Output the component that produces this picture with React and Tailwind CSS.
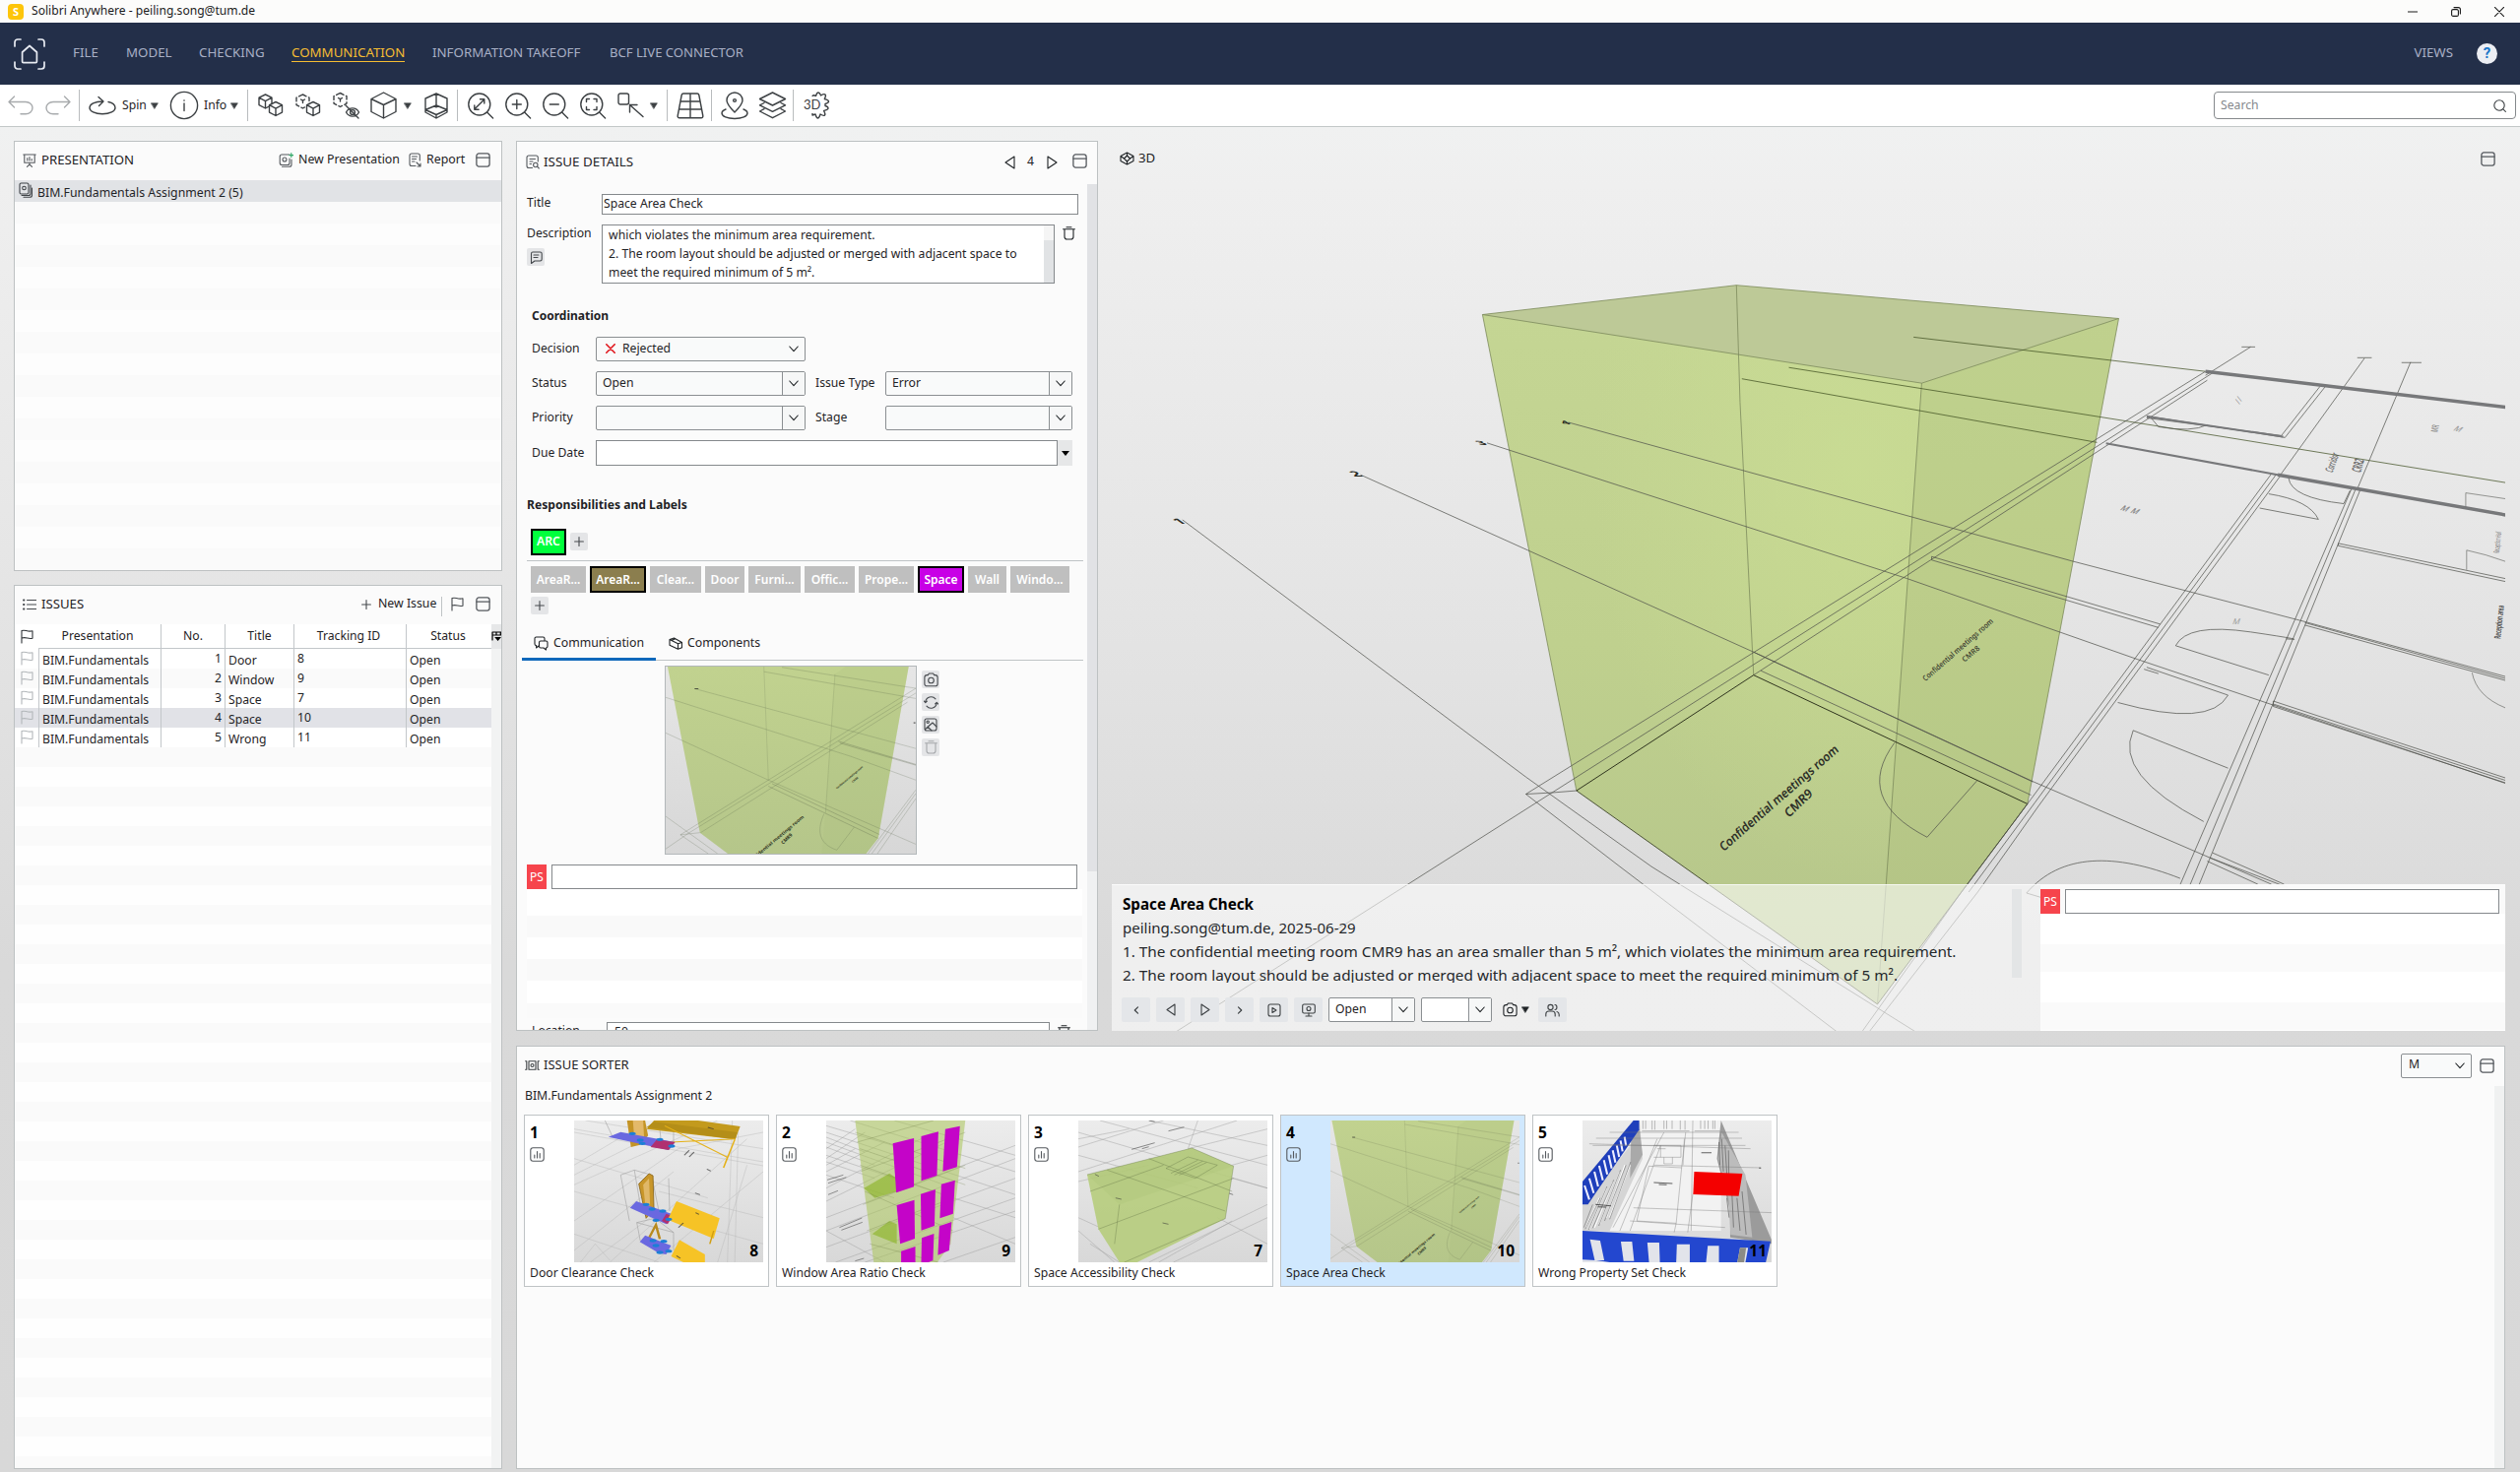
import React from 'react';

/* ---------- small drawing helpers ---------- */

function Icon({ w = 16, h = w, box, className = '', sw = 1.2, children }) {
  return (
    <svg
      width={w}
      height={h}
      viewBox={box || `0 0 ${w} ${h}`}
      fill="none"
      stroke="currentColor"
      strokeWidth={sw}
      strokeLinecap="round"
      strokeLinejoin="round"
      className={'block shrink-0 ' + className}
    >
      {children}
    </svg>
  );
}

const Caret = ({ className = '' }) => (
  <Icon w={8} h={7} className={className} sw={0.6}>
    <path d="M.6 .8h6.8L4 6.2z" fill="currentColor" />
  </Icon>
);

const Chevron = ({ className = '' }) => (
  <Icon w={10} h={7} className={className} sw={1.1}>
    <path d="M.8 1 5 5.6 9.2 1" />
  </Icon>
);

const WindowIcon = ({ className = '' }) => (
  <Icon w={15} h={15} className={'text-[#55595e] ' + className} sw={1.3}>
    <rect x=".9" y=".9" width="13.2" height="13.2" rx="2.4" />
    <path d="M1 5.2h13" />
  </Icon>
);

const Trash = ({ className = '' }) => (
  <Icon w={13} h={14} className={className} sw={1.1}>
    <path d="M.6 2.8h11.8M4 .7h5M2 3v7.2c0 1.7.9 2.8 2.6 2.8h3.8c1.7 0 2.6-1.1 2.6-2.8V3" />
  </Icon>
);

const Flag = ({ className = '' }) => (
  <Icon w={13} h={15} className={className} sw={1.1}>
    <path d="M1 14V1.6c3.6-1.6 5.4 1.6 11 .2v7.4c-4.6 1.2-6-1.6-11-.2" />
  </Icon>
);

const Camera = ({ className = '' }) => (
  <Icon w={15} h={15} className={className} sw={1.1}>
    <path d="M4.3 2.6 5.4 1h4.2l1.1 1.6h1c1.4 0 2.4 1 2.4 2.4v6.4c0 1.4-1 2.4-2.4 2.4H3.300c-1.400 0-2.400-1-2.400-2.400V5c0-1.400 1-2.400 2.400-2.400z" />
    <circle cx="7.5" cy="8" r="2.800" />
  </Icon>
);

const PlusIcon = ({ className = '' }) => (
  <Icon w={10} h={10} className={className} sw={1.1}>
    <path d="M5 .6v8.800M.6 5h8.800" />
  </Icon>
);

const Lens = ({ children }) => (
  <Icon w={27} h={27} sw={1.400}>
    <circle cx="11.800" cy="12" r="11" />
    <path d="m19.600 20 6 6" />
    {children}
  </Icon>
);

const CUBE = 'M7.500 1 14 4.200v7.400L7.500 15 1 11.600V4.200zM1 4.200l6.500 3.400L14 4.200M7.500 7.600V15';

/* ---------- title bar, menu and toolbar ---------- */

function TitleBar() {
  return (
    <div className="flex h-[23px] shrink-0 items-center bg-[#fcfcfb] text-[12.1px] text-[#1b1b1b]">
      <div className="ml-[8px] flex h-[16px] w-[16px] items-center justify-center rounded-[4px] bg-[#fdc50a] text-[11px] font-bold leading-none text-white">S</div>
      <span className="ml-[8px]">Solibri Anywhere - peiling.song@tum.de</span>
      <div className="ml-auto flex items-center text-[#1b1b1b]">
        <Icon w={10} h={10} sw={1}><path d="M0 5h10" /></Icon>
        <Icon w={10} h={10} sw={1.100} className="ml-[34px]">
          <rect x=".6" y="2.600" width="6.800" height="6.800" rx="1.500" />
          <path d="M3 .6h4.400a2 2 0 0 1 2 2V7" />
        </Icon>
        <Icon w={10} h={10} sw={1.100} className="ml-[34px] mr-[16px]"><path d="m.4.4 9.200 9.200M9.600.4.4 9.600" /></Icon>
      </div>
    </div>
  );
}

function MenuBar() {
  return (
    <div className="flex h-[63px] shrink-0 items-center bg-[#232f49] pb-[2px] text-[13.300px] text-[#a9b0c6]">
      <Icon w={32} h={32} className="ml-[14px] mt-[2px] text-[#e8ebf2]" sw={1.700}>
        <path d="M1 8V4a3 3 0 0 1 3-3h3M25 1h3a3 3 0 0 1 3 3v4M31 24v4a3 3 0 0 1-3 3h-3M7 31H4a3 3 0 0 1-3-3v-4" />
        <path d="M16 7.500 8.600 14v9.500c0 .8.400 1.200 1.200 1.200h12.400c.8 0 1.200-.4 1.200-1.200V14z" />
      </Icon>
      <span className="ml-[28px] w-[54px]">FILE</span>
      <span className="w-[74px]">MODEL</span>
      <span className="w-[94px]">CHECKING</span>
      <span className="h-[18px] w-[115px] whitespace-nowrap border-b border-[#f5bd33] leading-[17px] text-[#f5bd33]">COMMUNICATION</span>
      <span className="ml-[28px] w-[180px]">INFORMATION TAKEOFF</span>
      <span className="text-[13.100px]">BCF LIVE CONNECTOR</span>
      <span className="ml-auto">VIEWS</span>
      <div className="ml-[24px] mr-[23px] mt-[1px] flex h-[21px] w-[21px] items-center justify-center rounded-full bg-[#eceef3] font-['Roboto',sans-serif] text-[15px] font-bold text-[#1b76c8]">?</div>
    </div>
  );
}

const Sep = ({ className = '' }) => <div className={'h-[32px] w-px shrink-0 bg-[#b9bcbe] ' + className} />;

function Toolbar() {
  return (
    <div className="flex h-[43px] shrink-0 items-center border-b border-[#c3c8c8] bg-white text-[12.200px] text-[#3c4043]">
      <Icon w={26} h={20} className="ml-[8px] text-[#a8abad]" sw={1.400}><path d="M6.500 1 1 6.500 6.500 12M1.500 6.500H18c4 0 7 2.500 7 6s-3 6.300-7 6.300h-5" /></Icon>
      <Icon w={26} h={20} className="ml-[12px] text-[#a8abad]" sw={1.400}><path d="m19.500 1 5.500 5.500-5.500 5.500M24.500 6.500H8c-4 0-7 2.500-7 6s3 6.300 7 6.300h5" /></Icon>
      <Sep className="ml-[8px]" />
      <Icon w={28} h={20} className="ml-[9px]" sw={1.400}>
        <path d="M10 1.500 15 6l-4.500 4.500M14.500 6C6 6 1 9 1 12.500 1 16 6.500 18.800 14 18.800S27 16 27 12.500c0-3-2.500-5-7-6" />
      </Icon>
      <span className="ml-[6px] w-[29px] text-[#1f2326]">Spin</span>
      <Caret />
      <Icon w={30} h={30} className="ml-[11px]" sw={1.400}>
        <circle cx="15" cy="15" r="13.600" /><path d="M15 13v7.500" strokeWidth="1.400" /><path d="M15 10v.1" strokeWidth="1.600" />
      </Icon>
      <span className="ml-[5px] w-[27px] text-[#1f2326]">Info</span>
      <Caret />
      <Sep className="ml-[9px]" />
      <Icon w={26} h={24} className="ml-[10px]" sw={1.400}>
        <path d={CUBE} /><path d={CUBE} transform="translate(10.500 7.500)" fill="#fff" />
      </Icon>
      <Icon w={26} h={24} className="ml-[12px]" sw={1.400}>
        <path d="M7.500 1 14 4.200v7.400L7.500 15 1 11.600V4.200z" strokeDasharray="4 2.600" /><path d="M5.500 6 7.500 7.200 9.500 6M7.500 7.200V9.500" />
        <path d={CUBE} transform="translate(10.500 7.500)" fill="#fff" />
      </Icon>
      <Icon w={28} h={28} className="ml-[12px]" sw={1.400}>
        <path d="M7.500 1.500 14 4.700v7.400l-6.500 3.400L1 12.100V4.700z" strokeDasharray="4 2.600" /><path d="M5.500 6.500 7.500 7.700l2-1.200M7.500 7.700V10" />
        <path d="M13.500 21c3-5.500 10-5.500 13 0-3 5.500-10 5.500-13 0zM13 14l13 13" /><circle cx="20" cy="21" r="2.400" />
      </Icon>
      <Icon w={27} h={28} className="ml-[10px]" sw={1.400}>
        <path d="M13.500 1 26 7.500v13L13.500 27 1 20.500v-13zM1 7.500 13.500 13.500 26 7.500M13.500 13.500V27" />
      </Icon>
      <Caret className="ml-[7px]" />
      <Icon w={24} h={27} className="ml-[13px]" sw={1.400}>
        <path d="M12 1 23 6v14l-11 6L1 20V6zM12 1v14M1 17.500l11-4.500 11 4.500L12 22.500zM12 22.500V26" />
      </Icon>
      <Sep className="ml-[9px]" />
      <div className="ml-[10px] flex gap-[11px]">
        <Lens><path d="m7 16.800 9.600-9.600M12.500 6.800h4.300v4.300M6.800 13v4.200h4.300" /></Lens>
        <Lens><path d="M11.800 7.500v9M7.300 12h9" /></Lens>
        <Lens><path d="M7.300 12h9" /></Lens>
        <Lens><path d="M6.500 9.500v-3h3M14 6.500h3v3M17 14.500v3h-3M9.500 17.500h-3v-3" /></Lens>
      </div>
      <Icon w={27} h={26} className="ml-[11px]" sw={1.400}>
        <rect x="1" y="1" width="10.500" height="11" rx="2" /><path d="M12.500 20v-7.500h7.500M12.500 12.500 26 24.500" />
      </Icon>
      <Caret className="ml-[6px]" />
      <Sep className="ml-[9px]" />
      <Icon w={28} h={27} className="ml-[9px]" sw={1.400}>
        <path d="M7 1h14c1 0 1.600.5 1.800 1.500l4 21c.2 1.300-.4 2.200-1.800 2.200H3c-1.400 0-2-.9-1.800-2.200l4-21C5.400 1.500 6 1 7 1zM14 1v24.500M4 9h20M2.500 17h23" />
      </Icon>
      <Sep className="ml-[7px]" />
      <Icon w={28} h={29} className="ml-[9px]" sw={1.400}>
        <path d="M14 21C9 16 6 12.500 6 9a8 8 0 0 1 16 0c0 3.500-3 7-8 12z" /><circle cx="14" cy="9" r="1.400" />
        <path d="M5 18c-2.500 1-4 2.300-4 4 0 3.200 5.500 5.500 13 5.500S27 25.200 27 22c0-1.700-1.500-3-4-4" />
      </Icon>
      <Icon w={29} h={28} className="ml-[10px]" sw={1.400}>
        <path d="m14.500 1 13 6.500-13 6.500-13-6.500zM6 11.500l-4.500 2.300 13 6.500 13-6.500L23 11.500M6 17.700 1.500 20l13 6.700 13-6.700-4.500-2.300" />
      </Icon>
      <Sep className="ml-[6px]" />
      <div className="relative ml-[10px] h-[30px] w-[30px]">
        <Icon w={30} h={30} sw={1.400}>
          <path d="M9 22.500V25l3-1c.8 2.500 1 4 2.500 4s1.700-1.500 2.500-4c2.500 1.500 3.500 2 4.500 1s.5-2-1-4.500c2.800-.8 4.500-1 4.500-2.500 0-1.400-.8-1.800-3-2.500v-2c2.200-.7 3.500-1.100 3.500-2.500s-1.700-1.700-4.200-2.500c1.300-2.400 1.700-3.500.7-4.500s-2-.5-4.500 1C16.700 3 16.500 2 15 2s-1.700 1-2.500 3.500C10.500 4.500 9.500 4.500 9 6" />
        </Icon>
        <span className="absolute left-0 top-[6px] bg-white font-['Lato',sans-serif] text-[13px] leading-[17px]">3D</span>
      </div>
      <div className="ml-auto mr-[4px] flex h-[28px] w-[307px] items-center rounded-[4px] border border-[#85898c] bg-white pl-[6px] pr-[9px]">
        <span className="pt-px text-[#85888c]">Search</span>
        <Icon w={13} h={13} className="ml-auto" sw={1.100}><circle cx="6" cy="6" r="5.200" /><path d="m9.800 9.800 2.600 2.600" /></Icon>
      </div>
    </div>
  );
}

/* ---------- left column ---------- */

function PresentationPanel() {
  return (
    <section className="flex h-[437px] w-[496px] shrink-0 flex-col border border-[#bdc1c2] bg-[#fbfbfb]">
      <header className="flex h-[39px] shrink-0 items-center pb-[2px] pl-[8px] pr-[11px]">
        <Icon w={14} h={14} className="text-[#55595e]" sw={1.100}>
          <path d="M.8 1h12.400M1.800 1v8.200h10.400V1M4.500 13.300 7 11l2.500 2.300M7 9.200V11M4.800 7V4.500M7 7V3.500M9.200 7V5.500" />
        </Icon>
        <span className="ml-[5px] text-[13.200px]">PRESENTATION</span>
        <Icon w={15} h={15} className="ml-auto text-[#55595e]" sw={1.100}>
          <path d="M11 2H3.200C2 2 1.200 2.800 1.200 4v6.500c0 1.200.8 2 2 2H9c1.200 0 2-.8 2-2V6M3.500 14.200H11c1.200 0 2-.8 2-2V7" /><circle cx="6" cy="7" r="2" />
          <path d="M12.800.6v4M10.800 2.600h4" stroke="#2fa765" />
        </Icon>
        <span className="ml-[5px] w-[103px] text-[12.350px]">New Presentation</span>
        <Icon w={13} h={15} className="ml-[9px] text-[#55595e]" sw={1.100}>
          <path d="M11.300 8V3c0-1.300-.8-2-2-2H3c-1.300 0-2 .7-2 2v8.500c0 1.300.7 2 2 2h4M3.500 4h5M3.500 6.500h4M3.500 9H6M8 10l4 4M12 11v3H9" />
        </Icon>
        <span className="ml-[5px] w-[39px] text-[12.350px]">Report</span>
        <WindowIcon className="ml-[11px]" />
      </header>
      <div className="flex h-[22px] shrink-0 items-center bg-[#e1e3e6] pl-[4px]">
        <Icon w={14} h={16} className="mb-[2px] text-[#3f4347]" sw={1.100}>
          <rect x="1" y="1" width="9" height="11" rx="1.500" /><circle cx="5.500" cy="6" r="1.800" /><path d="M3 13.500h7c1.200 0 2-.7 2-2V3M5 15.300h6.500c1.300 0 2-.8 2-2V6" />
        </Icon>
        <span className="ml-[5px] pt-[5px] text-[12.300px]">BIM.Fundamentals Assignment 2 (5)</span>
      </div>
      <div className="flex-1 bg-[repeating-linear-gradient(180deg,#fafafa_0px,#fafafa_22px,#fdfdfd_22px,#fdfdfd_44px)]" />
    </section>
  );
}

const ISSUES = [
  ['1', 'Door', '8'],
  ['2', 'Window', '9'],
  ['3', 'Space', '7'],
  ['4', 'Space', '10'],
  ['5', 'Wrong', '11'],
];
const ROW_BG = ['bg-white', 'bg-[#fafafa]', 'bg-white', 'bg-[#e1e2e7]', 'bg-white'];

function IssuesPanel() {
  return (
    <section className="mt-[14px] flex h-[898px] w-[496px] shrink-0 flex-col border border-[#bdc1c2] bg-[#fbfbfb]">
      <header className="flex h-[39px] shrink-0 items-center pb-[2px] pl-[8px] pr-[11px]">
        <Icon w={14} h={12} className="text-[#45494d]" sw={1.100}><path d="M4.500 1.500H14M4.500 6H14M4.500 10.500H14" /><path d="M1 1.500h.4M1 6h.4M1 10.500h.4" strokeWidth="2" /></Icon>
        <span className="ml-[5px] text-[13.200px]">ISSUES</span>
        <PlusIcon className="ml-auto text-[#45494d]" />
        <span className="ml-[7px] w-[60px] text-[12.300px]">New Issue</span>
        <div className="ml-[4px] mt-[4px] h-[20px] w-px bg-[#bfc4c6]" />
        <Flag className="ml-[9px] text-[#45494d]" />
        <WindowIcon className="ml-[12px]" />
      </header>
      <div className="flex min-h-0 flex-1 text-[12.200px]">
        <div className="flex w-[484px] flex-col">
          <div className="flex h-[25px] shrink-0 bg-white text-center leading-[23px]">
            <div className="w-[24px] pl-[6px] pt-[5px]"><Flag className="text-[#303438]" /></div>
            <div className="w-[125px] border-b border-r border-[#c3c7ca] pr-[4px]">Presentation</div>
            <div className="w-[65px] border-b border-r border-[#c3c7ca]">No.</div>
            <div className="w-[70px] border-b border-r border-[#c3c7ca]">Title</div>
            <div className="w-[114px] border-b border-r border-[#c3c7ca] pr-[3px]">Tracking ID</div>
            <div className="flex-1 border-b border-[#c3c7ca] pr-[2px]">Status</div>
          </div>
          {ISSUES.map((r, i) => (
            <div key={r[0]} className={'flex h-[20px] shrink-0 ' + ROW_BG[i]}>
              <div className="w-[25px] border-r border-[#c3c7ca] pl-[6px] pt-[2px]"><Flag className="text-[#b3b7ba]" /></div>
              <div className="w-[124px] border-r border-[#c3c7ca] pl-[3px] leading-[23px]">BIM.Fundamentals</div>
              <div className="w-[65px] border-r border-[#c3c7ca] pr-[3px] text-right leading-[20px]">{r[0]}</div>
              <div className="w-[70px] border-r border-[#c3c7ca] pl-[3px] leading-[23px]">{r[1]}</div>
              <div className="w-[114px] border-r border-[#c3c7ca] pl-[3px] leading-[20px]">{r[2]}</div>
              <div className="pl-[3px] leading-[23px]">Open</div>
            </div>
          ))}
          <div className="flex-1 bg-[repeating-linear-gradient(180deg,#fafafa_0px,#fafafa_20px,#fefefe_20px,#fefefe_40px)]" />
        </div>
        <div className="flex-1 bg-[#f2f3f3]">
          <div className="h-[25px] bg-[#e6e7e8] pt-[7px]">
            <Icon w={10} h={11} className="text-black" sw={1.200}>
              <path d="M1 9V1h8.500M1 4h8.500M5 1v3M9.300 1v3" /><path d="M3.200 6h6.800L6.600 10z" fill="currentColor" strokeWidth="0" />
            </Icon>
          </div>
        </div>
      </div>
    </section>
  );
}

/* ---------- issue details ---------- */

function Combo({ className = '', value, split = true }) {
  return (
    <div className={'flex h-[25px] shrink-0 items-stretch overflow-hidden rounded-[2px] border border-[#8b8f92] bg-[#f9fafa] text-[12.200px] ' + className}>
      <div className="flex flex-1 items-center pb-px pl-[6px]">{value}</div>
      <div className={'flex w-[23px] items-center justify-center ' + (split ? 'border-l border-[#8b8f92] bg-[#f6f7f7]' : '')}><Chevron /></div>
    </div>
  );
}

const TAGS = [
  ['AreaR...', 'w-[56px] bg-[#bfbfbf]'],
  ['AreaR...', 'w-[57px] bg-[#8b7e4e] border-2 border-black'],
  ['Clear...', 'w-[52px] bg-[#bfbfbf]'],
  ['Door', 'w-[40px] bg-[#bfbfbf]'],
  ['Furni...', 'w-[53px] bg-[#bfbfbf]'],
  ['Offic...', 'w-[51px] bg-[#bfbfbf]'],
  ['Prope...', 'w-[56px] bg-[#bfbfbf]'],
  ['Space', 'w-[47px] bg-[#c800e6] border-2 border-black'],
  ['Wall', 'w-[39px] bg-[#bfbfbf]'],
  ['Windo...', 'w-[60px] bg-[#bfbfbf]'],
];

const SmallButton = ({ children, className = '' }) => (
  <div className={'flex h-[18px] w-[18px] items-center justify-center rounded-[2px] bg-[#e4e5e7] text-[#45494d] ' + className}>{children}</div>
);

/* Camera snapshot of the meeting room volume stored with the issue. */
function RoomSnapshot({ w, h }) {
  const L = (d, o = 0.36) => <path d={d} stroke="#555f45" strokeOpacity={o} />;
  return (
    <svg width={w} height={h} viewBox="407 532 665 516" preserveAspectRatio="none" className="block" fill="none" strokeWidth="1.700">
      <defs>
        <linearGradient id={'snapbg' + w} x1="0" y1="0" x2="0" y2="1"><stop offset="0" stopColor="#e6e6e6" /><stop offset="1" stopColor="#d7d7d7" /></linearGradient>
        <linearGradient id={'snapfill' + w} x1="0" y1="0" x2="0" y2="1"><stop offset="0" stopColor="#c1d28f" /><stop offset="1" stopColor="#b5c68a" /></linearGradient>
      </defs>
      <rect x="407" y="532" width="665" height="516" fill={`url(#snapbg${w})`} />
      <path d="M412 532H1053L972 1005 940 1048H572L498 990z" fill={`url(#snapfill${w})`} />
      <path d="M857 553 832 930 822 1048H940L972 1005 1053 532H885z" fill="#a5b878" fillOpacity=".14" />
      {L('M668 532 680 845M857 553 832 935', 0.25)}
      {L('M484 593 1072 758M407 617 900 780 1072 845M407 715 680 845 1072 1022M668 546 1072 620M716 534 1072 592')}
      {L('M1072 592 446 996M1072 605 470 990M1050 630 500 990')}
      {L('M680 862 970 1005M690 855 975 995M866 738 1072 802M870 743 1072 804', 0.45)}
      {L('M446 996 498 990M407 945 545 1048M446 996 520 1048M407 1035 470 990M1072 872 945 1048M1072 882 955 1048M1072 896 970 1048')}
      {L('M828 938C810 980 810 1020 862 1038L908 975')}
      <path d="M484 593h10M1066 687h5" stroke="#222" strokeWidth="3" strokeOpacity=".7" />
      <g fill="#2f3522" fontFamily="Noto Sans, sans-serif" fontWeight="700" textAnchor="middle">
        <text transform="translate(702 1012) rotate(-41)" fontSize="12" textLength="195" lengthAdjust="spacingAndGlyphs">Confidential meetings room</text>
        <text transform="translate(732 1010) rotate(-45)" fontSize="13">CMR9</text>
        <text transform="translate(897 840) rotate(-41)" fontSize="7" textLength="92" lengthAdjust="spacingAndGlyphs">Confidential meetings room</text>
        <text transform="translate(912 846) rotate(-41)" fontSize="7">CMR8</text>
      </g>
    </svg>
  );
}

function IssueDetails() {
  return (
    <section className="mt-[14px] flex h-[904px] w-[591px] shrink-0 flex-col overflow-hidden border border-[#bdc1c2] bg-[#fbfbfb] text-[12.200px]">
      <header className="flex h-[43px] shrink-0 items-center pb-[2px] pl-[9px] pr-[10px]">
        <Icon w={14} h={15} className="text-[#55595e]" sw={1.100}>
          <path d="M12.300 7V3c0-1.300-.8-2-2-2H3c-1.300 0-2 .7-2 2v8.500c0 1.300.7 2 2 2h3.500M4 4.500h5.500M4 7h3M4 9.500h1.500" /><circle cx="9.800" cy="10.500" r="2.200" /><path d="m11.500 12.200 1.800 1.800" />
        </Icon>
        <span className="ml-[4px] text-[13.400px]">ISSUE DETAILS</span>
        <Icon w={11} h={14} className="ml-auto" sw={1.100}><path d="M10 1v12L1 7z" /></Icon>
        <span className="ml-[12px] w-[8px]">4</span>
        <Icon w={11} h={14} className="ml-[12px]" sw={1.100}><path d="M1 1v12l9-6z" /></Icon>
        <WindowIcon className="mb-[3px] ml-[15px]" />
      </header>
      <div className="flex min-h-0 flex-1">
        <div className="flex w-[579px] flex-col [&>*]:shrink-0">
          <div className="mt-[10px] flex h-[21px] pl-[10px]">
            <span className="w-[76px] leading-[17px]">Title</span>
            <div className="w-[484px] border border-[#85898c] bg-white pl-px leading-[18px]">Space Area Check</div>
          </div>
          <div className="mt-[10px] flex h-[60px] pl-[10px]">
            <div className="w-[76px]">
              <div className="leading-[18px]">Description</div>
              <SmallButton className="mt-[6px]">
                <Icon w={13} h={13} sw={1.100}><path d="M3 1h7.500c1 0 1.700.7 1.700 1.700v5.600c0 1-.7 1.700-1.700 1.700H5l-3.500 2.500V2.700C1.500 1.700 2 1 3 1zM4 4h5M4 6.500h4" /></Icon>
              </SmallButton>
            </div>
            <div className="flex w-[460px] border border-[#85898c] bg-white">
              <div className="w-[448px] pl-[6px] leading-[19px]">
                <div className="tracking-[0.06px]">which violates the minimum area requirement.</div>
                <div>2. The room layout should be adjusted or merged with adjacent space to</div>
                <div>meet the required minimum of 5 m².</div>
              </div>
              <div className="flex-1 bg-[#f5f5f5] pt-[15px]"><div className="h-full bg-[#e1e3e5]" /></div>
            </div>
            <Trash className="ml-[8px] mt-[2px]" />
          </div>
          <div className="mt-[24px] pl-[15px] text-[12px] font-bold leading-[18px]">Coordination</div>
          <div className="mt-[12px] flex h-[25px] items-center pl-[15px]">
            <span className="w-[65px]">Decision</span>
            <Combo className="w-[213px]" split={false} value={<span className="flex items-center pl-[3px]"><Icon w={10} h={10} className="mr-[7px] text-[#e0161c]" sw={1.600}><path d="m.8.8 8.400 8.400M9.200.8.8 9.200" /></Icon>Rejected</span>} />
          </div>
          <div className="mt-[10px] flex h-[25px] items-center pl-[15px]">
            <span className="w-[65px] pb-px">Status</span><Combo className="w-[213px]" value="Open" />
            <span className="ml-[10px] w-[71px] pb-px">Issue Type</span><Combo className="w-[190px]" value="Error" />
          </div>
          <div className="mt-[10px] flex h-[25px] items-center pl-[15px]">
            <span className="w-[65px] pb-px">Priority</span><Combo className="w-[213px]" />
            <span className="ml-[10px] w-[71px] pb-px">Stage</span><Combo className="w-[190px]" />
          </div>
          <div className="mt-[10px] flex h-[26px] items-center pl-[15px]">
            <span className="w-[65px]">Due Date</span>
            <div className="h-full w-[469px] border border-[#85898c] bg-white" />
            <div className="flex h-full w-[15px] items-center justify-center bg-[#e6e7e8] text-black">
              <svg width="8" height="5" viewBox="0 0 8 5"><path d="M0 0h8L4 5z" fill="currentColor" /></svg>
            </div>
          </div>
          <div className="mt-[31px] pl-[10px] text-[12.150px] font-bold leading-[18px]">Responsibilities and Labels</div>
          <div className="ml-[10px] mt-[15px] flex h-[33px] w-[565px] border-b border-[#bfc4c6] pl-[4px]">
            <div className="flex h-[27px] w-[36px] items-center justify-center border-2 border-black bg-[#00ff3c] font-semibold text-white">ARC</div>
            <SmallButton className="ml-[4px] mt-[4px]"><PlusIcon /></SmallButton>
          </div>
          <div className="ml-[14px] mt-[5px] flex h-[27px] gap-[4px] text-[12px] font-semibold text-white">
            {TAGS.map(([t, c], i) => (
              <div key={i} className={'flex shrink-0 items-center justify-center whitespace-nowrap ' + c}>{t}</div>
            ))}
          </div>
          <SmallButton className="ml-[14px] mt-[4px]"><PlusIcon /></SmallButton>
          <div className="ml-[5px] mt-[14px] flex h-[33px] w-[570px] border-b border-[#bfc4c6]">
            <div className="flex h-[33px] w-[136px] items-center border-b-[3px] border-[#0f68bb] pl-[12px]">
              <Icon w={15} h={15} sw={1.100}>
                <path d="M11 4.500V2.600C11 1.500 10.400 1 9.500 1H2.600C1.600 1 1 1.500 1 2.600V8c0 1 .6 1.600 1.600 1.600V12L5 10" />
                <path d="M7 5h5.500c1 0 1.500.5 1.500 1.500v4c0 1-.5 1.500-1.500 1.500v2L10 12H7c-1 0-1.500-.5-1.500-1.500v-4C5.500 5.500 6 5 7 5z" />
              </Icon>
              <span className="ml-[5px] text-[12.300px]">Communication</span>
            </div>
            <div className="flex h-[30px] items-center pl-[13px]">
              <Icon w={14} h={13} sw={1.100}><path d="M1 2.500v5.800l8.500 4 4-1.500V5.500L5.500 1zM1 2.500l8.500 4.200 4-1.200M9.500 6.700v5.600M3 3.300l4-1.500" /></Icon>
              <span className="ml-[5px] text-[12.300px]">Components</span>
            </div>
          </div>
          <div className="ml-[150px] mt-[5px] flex h-[192px]">
            <div className="w-[256px] overflow-hidden border border-[#b3b8ba]"><RoomSnapshot w={254} h={190} /></div>
            <div className="ml-[5px] flex flex-col gap-[5px] pt-[5px]">
              <SmallButton><Camera /></SmallButton>
              <SmallButton><Icon w={15} h={15} sw={1.100}><path d="M1.800 7A5.800 5.800 0 0 1 12 3.800M13.200 8A5.800 5.800 0 0 1 3 11.200M.4 6l1.400 1.600L3.400 6.200M14.600 9l-1.400-1.600L11.600 8.800" /></Icon></SmallButton>
              <SmallButton><Icon w={14} h={14} sw={1.100}><rect x="1" y="1" width="12" height="12" rx="2" /><path d="M1.500 11.500 9 5l4 4M8 13l-4-4" /><circle cx="4.200" cy="4.200" r="1.200" /></Icon></SmallButton>
              <SmallButton className="text-[#a5a8ab]"><Trash /></SmallButton>
            </div>
          </div>
          <div className="mt-[10px] flex h-[25px] pl-[10px]">
            <div className="flex w-[20px] items-center justify-center bg-[#f6444c] text-[12px] text-white">PS</div>
            <div className="ml-[5px] w-[534px] border border-[#85898c] bg-white" />
          </div>
          <div className="ml-[10px] h-[131px] w-[564px] bg-[repeating-linear-gradient(180deg,#fff_0px,#fff_27px,#f9f9f9_27px,#f9f9f9_49px,#fff_49px,#fff_71px,#f9f9f9_71px,#f9f9f9_93px,#fff_93px,#fff_116px,#fafafa_116px,#fafafa_132px)]" />
          <div className="mt-[4px] flex h-[25px] shrink-0 pl-[15px]">
            <span className="w-[76px] pt-[1px] leading-[16px]">Location</span>
            <div className="w-[450px] border border-[#85898c] bg-white pl-[7px] leading-[18px]">50</div>
            <Trash className="ml-[8px] mt-[3px]" />
          </div>
        </div>
        <div className="w-[10px] bg-[#f0f1f2]"><div className="h-[698px] bg-[#e1e2e5]" /></div>
      </div>
    </section>
  );
}

/* ---------- 3D view ---------- */

function ModelScene() {
  return (
    <svg width="1415" height="918" viewBox="1129 129 1415 918" className="block" fill="none">
      <defs>
        <linearGradient id="volume" x1="0" y1="0" x2="0" y2="1">
          <stop offset="0" stopColor="#c5d694" /><stop offset=".5" stopColor="#bfd08e" /><stop offset="1" stopColor="#b4c48a" />
        </linearGradient>
        <radialGradient id="glow" cx=".85" cy=".22" r=".6"><stop offset="0" stopColor="#cbde94" stopOpacity=".7" /><stop offset="1" stopColor="#cbde94" stopOpacity="0" /></radialGradient>
      </defs>
      <g transform="translate(1120 130) scale(.9177 .49744)">
        <path d="M420 381 701 321 1124 389 1023 1380 857 1789 524 1353z" fill="url(#volume)" />
        <path d="M420 381 906 521 868 1508 857 1789 524 1353z" fill="url(#glow)" />
        <path d="M906 521 1124 389 1023 1380 857 1789z" fill="#a8b870" fillOpacity=".16" />
        <path d="M420 381 701 321 1124 389 906 521z" fill="#bdc997" />
        <g stroke="#7d8b5c" strokeWidth="1" className="[&>path]:[vector-effect:non-scaling-stroke]">
          <path d="M420 381 701 321 1124 389 906 521zM420 381 524 1353M1124 389 1023 1380M906 521 868 1508 857 1789M701 321 705 560 720 1117" strokeOpacity=".8" />
          <path d="M524 1353 857 1789 1023 1380" stroke="#4b5236" />
        </g>
        <g stroke="#4d4f48" strokeWidth="1" strokeOpacity=".7" className="[&>path]:[vector-effect:non-scaling-stroke]">
          <path d="M88 800 468 1325 607 1508 899 1845M468 1360 572 1508 812 1845M497 1357 81 1845M468 1360 497 1357 524 1353" />
          <path d="M285 708 470 862 720 1070 1030 1335 1225 1490 1310 1550M425 643 890 920 1145 1085 1552 1338M515 601 1072 884 1330 1008 1552 1120" />
          <path d="M707 512 1100 642M759 489 1165 608 1552 724M897 427 1220 497" stroke="#3b4a1c" />
          <path d="M1270 447 1220 505M1220 497 468 1360M1228 500 497 1357M1222 515 720 1117" />
          <path d="M1396 470 1303 708M1447 478 1388 737M1260 447h15M1388 469h16M1437 479h22" />
          <path d="M720 1117 1023 1380M524 1353 720 1117" stroke="#30351f" strokeOpacity="1" />
          <path d="M728 1108 1027 1362M720 1070 1029 1335" />
          <path d="M917 875 1170 1013M917 882 1168 1020M917 875v7" />
          <path d="M1293 706 1027 1370 950 1560 840 1845M1303 710 1035 1385 968 1560 848 1845M1298 708 1031 1378 958 1560M1293 706 1303 710" />
          <path d="M1382 735 1192 1545M1391 740 1213 1545M1386 738 1203 1545M1382 735 1391 740" />
          <path d="M1155 588 1308 632 1353 527M1155 592 1304 628 1347 527M1159 590 1168 610Q1205 622 1222 606" />
          <path d="M1290 747Q1335 760 1345 799L1280 776M1312 715Q1315 755 1373 767L1380 740" />
          <path d="M1187 1057Q1200 1010 1270 1029T1309 1043M1187 1057 1290 1117M1155 1101 1245 1158Q1225 1225 1123 1173M1152 1105 1168 1114" />
          <path d="M1245 1307 1140 1230Q1118 1320 1218 1416M876 1255Q830 1370 912 1448L967 1333" />
          <path d="M1192 1532C1120 1480 1060 1480 1022 1562L1040 1572" />
          <path d="M1367 848 1552 920M1367 853 1552 926M1367 848v5M1330 1010 1552 1124M1330 1015 1552 1128M1295 1170 1552 1327M1295 1176 1552 1332M1295 1181 1552 1337M1295 1170v11M1228 1480 1307 1544M1225 1490 1293 1544M1222 1497 1278 1544" />
          <path d="M1552 757 1508 745v28M1552 885Q1530 870 1509 862v40M1515 1112Q1520 1160 1552 1184" strokeOpacity=".55" />
        </g>
        <g stroke="#77787a" strokeWidth="3.500" className="[&>path]:[vector-effect:non-scaling-stroke]">
          <path d="M1220 497 1552 570M1300 708 1552 790" />
          <path d="M1110 644 1300 708M1155 589 1306 630" strokeWidth="2" />
        </g>
      </g>
      <g fill="#2b2d26" fontFamily="Noto Sans, sans-serif" textAnchor="middle">
        <text transform="translate(1809 814) rotate(-41) skewX(-6)" fontSize="12.600" fontWeight="600" textLength="156" lengthAdjust="spacingAndGlyphs">Confidential meetings room</text>
        <text transform="translate(1829 819) rotate(-44) skewX(-6)" fontSize="12.500" fontWeight="600">CMR9</text>
        <text transform="translate(1990 662) rotate(-41)" fontSize="8" fontWeight="600" fillOpacity=".85" textLength="92" lengthAdjust="spacingAndGlyphs">Confidential meetings room</text>
        <text transform="translate(2003 666) rotate(-41)" fontSize="7.500" fontWeight="600" fillOpacity=".85">CMR8</text>
        <g fill="#444">
          <text transform="translate(2372 471) rotate(-70) scale(.55 1.250)" fontSize="9" fontWeight="600" fillOpacity=".75">Corridor</text>
          <text transform="translate(2399 474) rotate(-75) scale(.6 1.500)" fontSize="9" fontWeight="700" fillOpacity=".75">CRR2</text>
          <text transform="translate(2541 632) rotate(-84)" fontSize="9" fontWeight="600" textLength="34" lengthAdjust="spacingAndGlyphs">Reception area</text>
          <text transform="translate(2539 551) rotate(-84)" fontSize="8" fillOpacity=".8" textLength="22" lengthAdjust="spacingAndGlyphs">Reception Hall</text>
          <text transform="translate(2161 520) rotate(15) skewX(-30)" fontSize="8" fontWeight="600" fillOpacity=".6" textLength="18">MM</text>
          <text transform="translate(2276 408) rotate(-60)" fontSize="9" fillOpacity=".45">//</text>
          <text transform="translate(2476 436) rotate(-78) scale(.7 1.400)" fontSize="7" fontWeight="600" fillOpacity=".6">MR</text>
          <text transform="translate(2494 438) rotate(15) skewX(-30)" fontSize="8" fontWeight="600" fillOpacity=".45">M</text>
          <text transform="translate(2270 634) skewX(-20)" fontSize="8" fillOpacity=".5">M</text>
        </g>
        <g fontWeight="700" fontSize="7.500">
          <text transform="translate(1201 532) scale(2.400 1) skewX(30)">1</text>
          <text transform="translate(1380 484) scale(2.200 1) skewX(30)">2</text>
          <text transform="translate(1507 452) scale(2 .8) skewX(30)">3</text>
          <text transform="translate(1592 431) scale(1.800 .7) skewX(30)">4</text>
        </g>
      </g>
    </svg>
  );
}

const NavButton = ({ children, className = '' }) => (
  <div className={'flex h-[25px] w-[29px] items-center justify-center rounded-[2px] bg-[#e4e6e9] text-[#3c4043] ' + className}>{children}</div>
);

function View3D() {
  return (
    <section className="relative ml-[14px] h-[918px] w-[1415px] shrink-0">
      <ModelScene />
      <div className="absolute left-0 right-0 top-[24px] flex h-[15px] items-center pl-[8px] pr-[10px]">
        <Icon w={15} h={14} sw={1.100}><path d="M7.500 1 14 4.500v5L7.500 13 1 9.500v-5zM7.500 1v3M1 4.500l3.500 2.500M14 4.500 10.500 7M7.500 13v-3" /><path d="M7.500 4 10.500 7 7.500 10 4.500 7z" /></Icon>
        <span className="ml-[4px] text-[13.200px]">3D</span>
        <WindowIcon className="ml-auto mt-px" />
      </div>
      <div className="absolute bottom-0 left-0 right-0 flex h-[149px] border-t border-white/70 bg-[#fdfdfd]/60">
        <div className="w-[943px] pl-[11px]">
          <div className="h-[99px] overflow-hidden pt-[7px] text-[15.300px] leading-[24px] text-[#25282b]">
            <div className="text-[15.200px] font-bold text-black">Space Area Check</div>
            <div className="text-[15px]">peiling.song@tum.de, 2025-06-29</div>
            <div className="whitespace-nowrap">1. The confidential meeting room CMR9 has an area smaller than 5 m², which violates the minimum area requirement.</div>
            <div className="whitespace-nowrap">2. The room layout should be adjusted or merged with adjacent space to meet the required minimum of 5 m².</div>
          </div>
          <div className="-ml-px mt-[15px] flex h-[25px] items-center text-[12.200px]">
            <NavButton><Icon w={6} h={8} sw={1.200}><path d="M4.500.8 1.300 4l3.200 3.200" /></Icon></NavButton>
            <NavButton className="ml-[6px]"><Icon w={10} h={13} sw={1.100}><path d="M9 1v11L1 6.500z" /></Icon></NavButton>
            <NavButton className="ml-[6px]"><Icon w={10} h={13} sw={1.100}><path d="M1 1v11l8-5.500z" /></Icon></NavButton>
            <NavButton className="ml-[6px]"><Icon w={6} h={8} sw={1.200}><path d="m1.500.8 3.200 3.200-3.200 3.200" /></Icon></NavButton>
            <NavButton className="ml-[6px]"><Icon w={14} h={14} sw={1.100}><rect x="1" y="1" width="12" height="12" rx="2" /><path d="M5 4.500v5L9 7z" /></Icon></NavButton>
            <NavButton className="ml-[6px]"><Icon w={14} h={14} sw={1.100}><rect x=".7" y="1" width="12.600" height="9" rx="1.500" /><circle cx="7" cy="5.500" r="2" /><path d="M7 10v3M4 13h6" /></Icon></NavButton>
            <Combo className="ml-[6px] w-[88px] bg-white" value="Open" />
            <Combo className="ml-[6px] w-[72px] bg-white" />
            <Camera className="ml-[11px]" />
            <Caret className="ml-[4px]" />
            <NavButton className="ml-[9px]"><Icon w={15} h={14} sw={1.100}><circle cx="5.500" cy="4" r="2.600" /><path d="M.8 13V11c0-2 1-3 3-3h3.400c2 0 3 1 3 3v2M10 1.500c2.600 0 2.600 5 0 5M12 8.500c1.500.4 2.200 1.400 2.200 3V13" /></Icon></NavButton>
          </div>
        </div>
        <div className="flex-1 bg-[#fafafa]/95 pt-[4px]">
          <div className="flex h-[25px]">
            <div className="flex w-[20px] items-center justify-center bg-[#f6444c] text-[12px] text-white">PS</div>
            <div className="ml-[5px] w-[441px] border border-[#85898c] bg-white" />
          </div>
          <div className="h-[119px] bg-[repeating-linear-gradient(180deg,#fff_0px,#fff_31px,#fafafa_31px,#fafafa_59px)]" />
        </div>
        <div className="absolute left-[914px] top-[4px] h-[90px] w-[10px] bg-[#e3e5e6]" />
      </div>
    </section>
  );
}

/* ---------- issue sorter ---------- */

const Frame = ({ x, y = 264, w, h = 432, id, children }) => (
  <svg width="192" height="144" viewBox={`${x} ${y} ${w} ${h}`} preserveAspectRatio="none" className="block" fill="none">
    <defs><linearGradient id={id} x1="0" y1="0" x2="0" y2="1"><stop offset="0" stopColor="#ececec" /><stop offset="1" stopColor="#d8d8d8" /></linearGradient></defs>
    <rect x={x} y={y} width={w} height={h} fill={`url(#${id})`} />
    {children}
  </svg>
);

function DoorThumb() {
  return (
    <Frame x={127} w={386} id="bgDoor">
      <path stroke="#b5b5b5" strokeWidth="1.400" strokeOpacity=".7" d="M127 290 513 390M127 300 513 402M150 264 513 350M127 460 420 264M127 570 340 350 513 300M127 610 300 696M127 480 513 640M200 696 480 320M290 696 513 420M127 660 330 420M160 696 300 540M420 696 480 400M127 380 400 500M300 480 513 560M450 264 440 696M462 300 455 696M140 696 170 640 200 690M127 400 240 300M127 430 260 330" />
      <path stroke="#999" strokeWidth="1.300" d="M222 430 240 570M222 430 250 415 285 430 300 540M250 415 262 520M320 440 322 540M190 264 205 312M300 264 304 320M330 264V330M255 575 330 605V660M255 575 262 630M255 575 292 562 330 605" />
      <path d="M235 264H272L278 310 262 338 243 345z" fill="#c49426" /><path d="M247 264H268L270 320H250z" fill="#e3b96a" />
      <path d="M290 264H380L466 282 456 322 275 290z" fill="#c39a1d" /><path d="M275 285 290 268 460 300 456 322z" fill="#b48e18" />
      <path stroke="#e5b117" strokeWidth="3" d="M440 376 312 280M325 330 456 320M455 322 432 408M432 408 440 376" />
      <path d="M197 314 222 299 333 330 320 354z" fill="#6a68e0" /><path d="M283 345 296 322 333 330 320 354z" fill="#b03070" />
      <path d="M259 457 280 426 288 432 290 535 274 562z" fill="#c8962a" stroke="#8a6518" strokeWidth="2" /><path d="M268 460 280 440 282 520 274 545z" fill="#e0b868" />
      <path d="M241 530 254 510 328 550 315 580z" fill="#6a68e0" /><path d="M306 570 315 548 328 556 318 580z" fill="#b03070" />
      <path d="M336 510 424 562 412 624 318 566z" fill="#f6c326" /><path stroke="#d19f12" strokeWidth="3" d="M412 600 404 640" />
      <path d="M280 622 294 582 302 625" stroke="#b98a1e" strokeWidth="5" />
      <path d="M261 634 272 614 325 645 315 672 300 668z" fill="#6a68e0" />
      <path d="M342 628 394 672V696H350L325 678z" fill="#f6c326" />
      <g fill="#1c7fd6">
        {[[246, 304], [262, 324], [266, 334], [302, 322], [326, 342], [274, 520], [286, 534], [308, 540], [320, 565], [294, 568], [288, 630], [310, 632], [320, 662], [302, 666], [294, 645]].map(([cx, cy], i) => <ellipse key={i} cx={cx} cy={cy} rx="7" ry="5" />)}
      </g>
      <path stroke="#333" strokeOpacity=".7" strokeWidth="2.500" d="M352 370 362 355M362 375 372 360M400 285 412 290M374 485 384 490M340 590 350 576M375 545 382 550M398 412 406 418M336 676 344 684" />
    </Frame>
  );
}

function WindowThumb() {
  const panes = [
    'M777 334 820 318 820 466 784 484z', 'M835 312 870 298 867 432 835 448z', 'M884 290 914 281 908 406 879 419z',
    'M785 522 821 506 822 624 792 640z', 'M834 488 864 474 862 585 835 599z', 'M876 458 904 446 900 548 873 562z',
    'M794 662 823 648V696H794z', 'M836 622 861 609 859 690 850 696H835z', 'M872 586 897 573 892 660 869 674z',
  ];
  return (
    <Frame x={641} w={386} id="bgWin">
      <path stroke="#999" strokeWidth="1.500" strokeOpacity=".7" d="M641 300 1027 490M641 330 900 470M641 370 860 480M641 280 800 350M641 430 780 500M690 264 1027 420M780 264 1027 370M641 560 1027 340M641 600 1027 380M641 510 900 320M641 470 860 300M641 650 1027 440M660 696 1027 500M641 420 760 330M720 696 1027 540M760 696 641 600M880 696 1027 620M900 500 1027 560M641 380 720 300M900 560 1027 640M641 350 700 290M641 400 700 350M641 315 720 360M641 345 740 400M641 390 740 440" />
      <path d="M700 264H925L895 640 868 696H738z" fill="#a9c558" fillOpacity=".55" />
      <path d="M718 470 770 425 785 440V480L740 500zM735 610 770 570 785 580V640z" fill="#8db52a" fillOpacity=".65" />
      <path stroke="#6c7a44" strokeWidth="1.300" strokeOpacity=".5" d="M700 300 925 410M710 420 925 300M710 400 900 500M716 520 925 400M724 600 900 500M730 640 870 696M710 350 925 460M720 480 900 600M704 330 860 264" />
      {panes.map((d) => <path key={d} d={d} fill="#c404c8" />)}
      <path stroke="#333" strokeOpacity=".6" strokeWidth="2" d="M643 445 676 430M645 455 682 437M668 590 714 561M672 598 715 574M645 490 665 478M700 692 718 684" />
    </Frame>
  );
}

function AccessThumb() {
  return (
    <Frame x={1156} w={386} id="bgAcc">
      <path stroke="#a0a0a0" strokeWidth="1.500" strokeOpacity=".75" d="M1156 345 1330 264M1156 420 1480 264M1156 300 1542 470M1200 264 1542 400M1300 264 1542 340M1156 370 1400 470M1380 350 1542 290M1470 400 1542 370M1156 450 1300 400M1156 560 1200 590M1180 640 1240 696M1156 600 1230 696M1320 696 1470 570M1300 696 1542 520M1350 696 1542 560M1440 560 1542 640M1470 440 1542 470M1400 264 1380 350M1156 320 1260 290" />
      <path d="M1174 429 1388 348 1473 403 1456 563 1276 696H1240L1197 595z" fill="#b5cc7a" fillOpacity=".88" />
      <path d="M1174 429 1388 348 1473 403 1240 520z" fill="#a6bd6e" fillOpacity=".2" />
      <path stroke="#55633a" strokeWidth="1.500" strokeOpacity=".5" d="M1174 429 1388 348 1473 403 1456 563 1250 696M1197 595 1473 440M1215 415 1456 540M1300 380 1470 480M1240 520 1230 640M1335 410 1380 375 1440 400 1395 440zM1345 425 1400 385M1352 430 1410 388M1362 430 1418 392M1180 480 1330 400" />
      <path stroke="#333" strokeOpacity=".65" strokeWidth="2" d="M1265 352 1312 332M1286 350 1300 344M1340 296 1372 284M1190 428 1198 434M1232 500 1244 504M1328 576 1340 580M1464 486 1472 490M1300 264 1312 268" />
    </Frame>
  );
}

function PropertyThumb() {
  return (
    <Frame x={920} w={557} id="bgProp">
      <path d="M1088 264H1328V600H980z" fill="#f2f2f2" />
      <path d="M1088 264 1097 380 1000 600 920 600V520L1070 330z" fill="#d5d5d5" />
      <path d="M1063 320 1088 290 1097 368 1060 440z" fill="#a9a9a9" />
      <path stroke="#fff" strokeWidth="4" d="M1060 400 1000 560M1045 400 990 560M1030 420 970 580M1010 450 955 590M990 470 940 595M970 500 930 590" />
      <path stroke="#777" strokeWidth="2" d="M1062 390 1000 565M1048 400 985 570M1032 415 968 585M1012 445 950 592M992 465 938 597M972 500 928 595M950 520 924 590" />
      <path d="M920 450 1070 264H1087V292L936 520H920z" fill="#1f3fbb" />
      <path stroke="#eef" strokeWidth="6" d="M926 462 940 505M940 440 953 485M955 420 966 465M969 402 980 446M983 385 993 428M997 370 1006 410M1009 355 1017 392M1021 340 1028 375M1032 325 1038 358M1044 314 1048 340" />
      <path d="M1328 264 1477 628V640L1355 620V540L1316 380z" fill="#9b9b9b" /><path d="M1330 300 1400 430 1420 620 1356 612 1350 500 1320 380z" fill="#bcbcbc" />
      <path stroke="#5f5f5f" strokeWidth="2" d="M1322 330 1325 400M1330 320 1335 420M1340 340 1346 440M1350 355 1352 480M1360 480 1365 590M1375 500 1384 600M1390 480 1402 612M1345 500 1352 560" />
      <path stroke="#777" strokeWidth="2" d="M960 318H1390M940 335 1415 350M950 340H1400M1000 300H1380M1115 403 1212 408 1196 577 1080 570zM1245 264 1240 600M1212 408 1224 300M1196 577 1190 605M1060 600 1150 340M1030 600 1140 320M1010 590 1160 300M1070 530 1480 545M1060 570 1340 590M1130 400 1445 408M1245 488 1230 605M1220 320 1216 400M1130 340H1210V376H1130M1160 376V396H1185V376M1150 340V376M1140 350H1165" strokeOpacity=".6" />
      <path stroke="#444" strokeWidth="2" d="M1098 290V264M1106 290V264M1125 292V264M1133 292V264M1160 290V264M1168 290V264M1184 290V264M1208 292V264M1222 292V264M1268 290V264M1280 290V264M1290 290V264M1304 290V264M1310 290V264M1095 296H1235M1250 296H1325" strokeOpacity=".5" />
      <path stroke="#222" strokeWidth="3" d="M1130 453 1185 456M1145 459 1168 460M958 520 1004 524M965 527 990 528M1440 409h6M1270 362H1300" strokeOpacity=".7" />
      <path d="M1249 420 1391 426 1380 494 1246 489z" fill="#f40000" />
      <path d="M920 600 1474 632 1460 696H920z" fill="#2347cf" />
      <g fill="#e2e4ea"><path d="M942 626 972 630 984 690H956z" /><path d="M1033 633H1066L1072 692H1041z" /><path d="M1111 636H1146L1148 696H1116z" /><path d="M1198 641H1236V696H1196z" /><path d="M1289 646H1322V696H1284z" /><path d="M1384 652H1408L1400 696H1376z" /><path d="M920 688 960 690 1000 696H920z" /></g>
      <path d="M1384 652H1402L1396 696H1376z" fill="#8b8b84" />
    </Frame>
  );
}

const CARDS = [
  ['1', '8', 'Door Clearance Check', <DoorThumb />],
  ['2', '9', 'Window Area Ratio Check', <WindowThumb />],
  ['3', '7', 'Space Accessibility Check', <AccessThumb />],
  ['4', '10', 'Space Area Check', <RoomSnapshot w={192} h={144} />],
  ['5', '11', 'Wrong Property Set Check', <PropertyThumb />],
];

function IssueSorter() {
  return (
    <section className="mt-[15px] flex h-[430px] w-[2020px] shrink-0 flex-col border border-[#bdc1c2] bg-[#fbfbfb]">
      <header className="flex h-[40px] shrink-0 items-center pb-[2px] pl-[8px] pr-[10px]">
        <Icon w={15} h={10} className="text-[#3c4043]" sw={1.100}>
          <rect x="4" y=".8" width="7" height="8.400" /><circle cx="7.500" cy="5" r="1.500" /><path d="M.6.8h1.200v8.400H.6M14.400.8h-1.200v8.400h1.200" />
        </Icon>
        <span className="ml-[4px] text-[13px]">ISSUE SORTER</span>
        <Combo className="ml-auto w-[72px]" split={false} value={<span className="pl-px">M</span>} />
        <WindowIcon className="ml-[8px]" />
      </header>
      <div className="flex min-h-0 flex-1 text-[12.200px]">
        <div className="flex-1">
          <div className="pl-[8px] pt-px leading-[18px] text-[12.250px]">BIM.Fundamentals Assignment 2</div>
          <div className="mt-[10px] flex gap-[7px] pl-[7px]">
            {CARDS.map(([n, id, name, pic]) => (
              <article key={n} className={'flex h-[175px] w-[249px] flex-col border border-[#bfc3c5] pl-[5px] pt-[5px] ' + (n === '4' ? 'bg-[#d0e8fe]' : 'bg-white')}>
                <div className="flex h-[144px]">
                  <div className="w-[45px]">
                    <div className="mt-[1px] text-[15.500px] font-bold leading-[22px] text-black">{n}</div>
                    <Icon w={15} h={15} className="mt-[4px] text-[#55595e]" sw={1.100}>
                      <rect x=".8" y=".8" width="13.400" height="13.400" rx="2.500" /><path d="M4.800 11V8M7.500 11V4.500M10.200 11V6.500" />
                    </Icon>
                  </div>
                  <div className="relative h-[144px] w-[192px]">
                    {pic}
                    <span className="absolute bottom-px right-[5px] text-[15.500px] font-bold leading-[22px] text-black">{id}</span>
                  </div>
                </div>
                <div className="mt-[2px] leading-[18px]">{name}</div>
              </article>
            ))}
          </div>
        </div>
        <div className="w-[10px] bg-[#f0f1f1]" />
      </div>
    </section>
  );
}

export default function App() {
  return (
    <div className="flex h-[1495px] w-[2559px] flex-col overflow-hidden font-['Noto_Sans',sans-serif] leading-normal text-[#1f2326]">
      <TitleBar />
      <MenuBar />
      <Toolbar />
      <main className="flex min-h-0 flex-1 bg-[linear-gradient(180deg,#f0f1f1_0px,#efefef_60px,#e6e6e6_430px,#d9d9d9_850px,#d8d8d8_100%)] pl-[14px]">
        <div className="w-[496px] shrink-0 pt-[14px]">
          <PresentationPanel />
          <IssuesPanel />
        </div>
        <div className="ml-[14px] w-[2020px] shrink-0">
          <div className="flex h-[918px]">
            <IssueDetails />
            <View3D />
          </div>
          <IssueSorter />
        </div>
      </main>
    </div>
  );
}
